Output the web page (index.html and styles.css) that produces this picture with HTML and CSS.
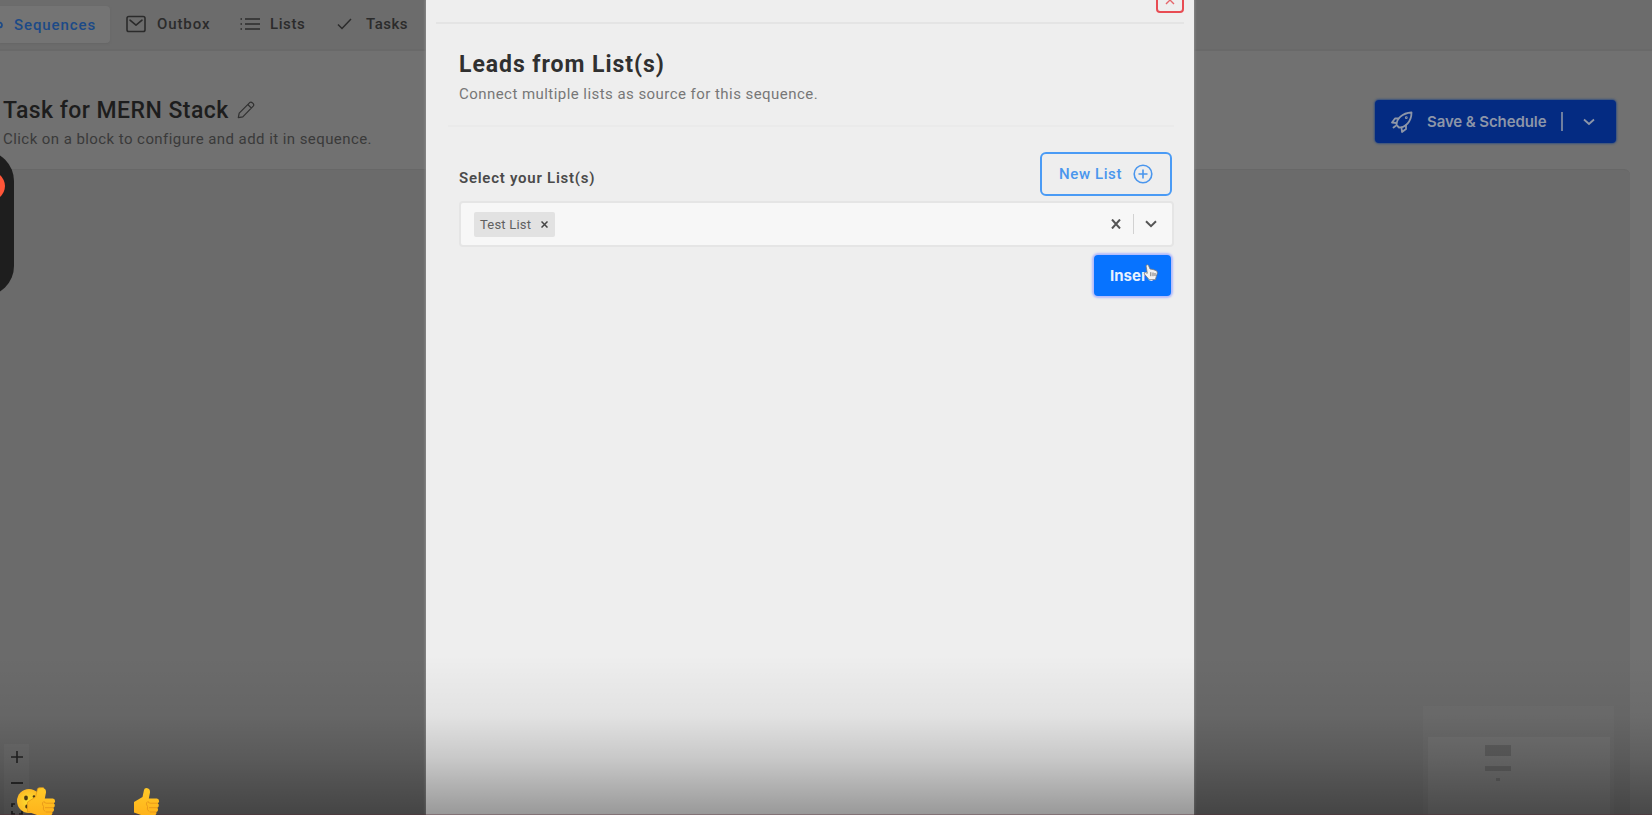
FILE: index.html
```html
<!DOCTYPE html>
<html lang="en">
<head>
<meta charset="utf-8">
<title>Sequences</title>
<link rel="stylesheet" href="styles.css">
</head>
<body>
<div class="screen">
  <header class="nav">
    <div class="tab tab-active"><svg width="5" height="12" viewBox="0 0 5 12" fill="none" stroke="currentColor" stroke-width="1.7"><path d="M-3 6a2.5 2.5 0 0 1 5 0a2.5 2.5 0 0 1-5 0"/></svg><span class="t-seq">Sequences</span></div>
    <div class="tab outbox"><svg width="20" height="18" viewBox="0 0 20 18" fill="none" stroke="currentColor" stroke-width="1.6" stroke-linecap="round" stroke-linejoin="round"><rect x="1" y="1.5" width="18" height="15" rx="1.8"/><path d="M4 5.2l6 5 6-5"/></svg><span class="t-out">Outbox</span></div>
    <div class="tab lists"><svg width="20" height="14" viewBox="0 0 20 14" fill="none" stroke="currentColor" stroke-width="1.4"><path d="M5 2h15M5 7h15M5 12h15M.5 2H2M.5 7H2M.5 12H2"/></svg><span class="t-lists">Lists</span></div>
    <div class="tab tasks"><svg width="15" height="12" viewBox="0 0 15 12" fill="none" stroke="currentColor" stroke-width="1.5"><path d="M1 6.5l4 4L14 1"/></svg><span class="t-tasks">Tasks</span></div>
  </header>
  <main class="page">
    <div class="page-head">
      <div>
        <h1 class="title"><span>Task for MERN Stack</span><svg width="18" height="18" viewBox="0 0 18 18" fill="none" stroke="currentColor" stroke-width="1.2" stroke-linejoin="round"><path d="M1.3 16.7l.9-4.6L12.7 1.6q1.3-1 2.5.1l1 1q1.1 1.2 0 2.5L5.8 15.8zM10.8 3.5l3.6 3.6"/></svg></h1>
        <p class="hint">Click on a block to configure and add it in sequence.</p>
      </div>
      <div class="save"><svg width="22" height="22" viewBox="0 0 22 22" fill="none" stroke="currentColor" stroke-width="1.8" stroke-linejoin="round" stroke-linecap="round"><path d="M8 16.500L5.500 14C5.500 8 11 2 20.500 1.500C20.500 11 14 16.500 8 16.500z"/><path d="M7.400 7.500H4L1 11.500l4.500.5M15 14.500V18l-4 3-.5-4.500M4.500 15l-2 1.500"/><circle cx="15.300" cy="6.700" r=".5"/></svg><span class="t-save">Save &amp; Schedule</span><i class="save-sep"></i><svg class="chev" width="12" height="8" viewBox="0 0 12 8" fill="none" stroke="currentColor" stroke-width="1.8"><path d="M1 1.5l5 4.500 5-4.500"/></svg></div>
    </div>
    <div class="canvas">
      <div class="zoom-controls">
        <svg width="12" height="12" viewBox="0 0 12 12" stroke="currentColor" stroke-width="1.6"><path d="M0 6h12M6 0v12"/></svg>
        <svg width="12" height="12" viewBox="0 0 12 12" stroke="currentColor" stroke-width="1.8"><path d="M0 6h12"/></svg>
        <svg width="12" height="12" viewBox="0 0 12 12" fill="none" stroke="currentColor" stroke-width="1.7"><path d="M1 4V1h3M8 1h3v3M11 8v3H8M4 11H1V8"/></svg>
      </div>
      <div class="minimap"><div class="minimap-view"><i class="node node-a"></i><i class="node node-b"></i><i class="node node-c"></i></div></div>
    </div>
  </main>

  <div class="recorder"><i class="rec-dot"></i></div>

  <section class="modal">
    <div class="modal-bar"><div class="close"><svg width="10" height="10" viewBox="0 0 10 10" fill="none" stroke="currentColor" stroke-width="1.4"><path d="M1 1l8 8M9 1L1 9"/></svg></div></div>
    <div class="modal-head">
      <h2 class="modal-title">Leads from List(s)</h2>
      <p class="modal-sub">Connect multiple lists as source for this sequence.</p>
    </div>
    <div class="modal-body">
      <div class="row">
        <span class="label">Select your List(s)</span>
        <div class="new-list"><span class="t-new">New List</span><svg width="20" height="20" viewBox="0 0 20 20" fill="none" stroke="currentColor" stroke-width="1.6"><circle cx="10" cy="10" r="8.8"/><path d="M5.500 10h9M10 5.500v9"/></svg></div>
      </div>
      <div class="select">
        <div class="tag"><span class="t-tag">Test List</span><svg width="7" height="7" viewBox="0 0 7 7" fill="none" stroke="currentColor" stroke-width="1.5"><path d="M.5.5l6 6M6.500.5l-6 6"/></svg></div>
        <svg class="clear" width="10" height="10" viewBox="0 0 10 10" fill="none" stroke="currentColor" stroke-width="2"><path d="M1 .5l8 9M9 .5l-8 9"/></svg>
        <i class="select-sep"></i>
        <svg width="12" height="8" viewBox="0 0 12 8" fill="none" stroke="currentColor" stroke-width="2"><path d="M1 1.300l5 4.800 5-4.800"/></svg>
      </div>
      <div class="actions"><div class="insert"><span class="t-insert">Insert</span></div></div>
    </div>
  </section>

  <svg class="pointer" width="15" height="17" viewBox="0 0 15 17"><path d="M3 1.500q1.800-1.500 2.700.3L7 5l3 .5 3.400 1.200q1.400 1 .8 3l-1 3-.8 3H6.200L1.300 10q-.5-1.500 1-1.500l2 .8z" fill="#f2f2f2" stroke="#777" stroke-width=".8"/><path d="M7.800 8.200v4M10 8.500v3.700M12 9v3" stroke="#777" stroke-width="1"/></svg>
  <div class="shade"></div>
  <div class="progress"></div>

  <svg class="reactions" width="170" height="28" viewBox="0 0 170 28">
    <defs>
      <linearGradient id="skin" x1="0" y1="0" x2="0" y2="1"><stop offset="0" stop-color="#ffc928"/><stop offset="1" stop-color="#ffb31a"/></linearGradient>
      <radialGradient id="face"><stop offset="0" stop-color="#fde030"/><stop offset="1" stop-color="#fcb924"/></radialGradient>
      <g id="thumb">
        <path d="M0 14L8.500 9 10 2Q10.300 0 12.500 0 16.300.3 16 4.500L14.800 10.500H23Q25.300 11 25.100 13.500 24.900 14.800 23.700 15.200 25.300 16 24.700 18.200 24.300 19.400 23.200 19.700 24.500 20.700 23.900 22.500 23.500 23.800 22.300 24 23 25.500 21.500 27H7L0 24.500z" fill="url(#skin)"/>
        <path d="M23.700 15.200h-7.500q-2.200-.2-2.400-2.200M23.200 19.700H15M22.300 24h-6.500M13 14q-1.500 2 .5 4.500-1 3 1.500 5" fill="none" stroke="#e8961a" stroke-width=".9"/>
      </g>
    </defs>
    <circle cx="29" cy="14" r="12" fill="url(#face)"/>
    <ellipse cx="26" cy="11" rx="1.900" ry="2.400" fill="#4c3a12"/><circle cx="34" cy="9.500" r="1.300" fill="#4c3a12"/><ellipse cx="26.500" cy="19.500" rx="1.200" ry="2" fill="#4c3a12"/>
    <path d="M27.500 15l8-5 2-8q.5-1.200 2-1.200h4v10l-9 14h-7z" fill="url(#skin)" stroke="#e69a14" stroke-width=".8"/>
    <use href="#thumb" x="30" y="1"/>
    <use href="#thumb" x="134" y="1"/>
  </svg>
</div>
</body>
</html>
```

FILE: styles.css
```css
* { box-sizing: border-box; }
body { margin: 0; font-family: Roboto, "Liberation Sans", sans-serif; }
svg { display: block; flex: none; }
h1, h2, p { margin: 0; }
i { display: block; flex: none; }
span { white-space: nowrap; }
.screen { position: relative; width: 1652px; height: 815px; overflow: hidden; background: #717171; display: flex; flex-direction: column; }

.nav { height: 51px; flex: none; display: flex; align-items: flex-start; background: #6c6c6c; border-bottom: 2px solid #696969; font-size: 15px; font-weight: 500; color: #2b2b2b; padding-top: 6px; }
.tab { display: flex; align-items: center; height: 36px; }
.tab-active { width: 110px; height: 37px; gap: 9px; background: #747474; border-radius: 0 4px 4px 0; color: #1c4a87; box-shadow: 0 1px 2px #666; }
.outbox { margin-left: 16px; gap: 11px; width: 94px; }
.lists { margin-left: 20px; gap: 10px; width: 78px; }
.tasks { margin-left: 19px; gap: 14px; }
.t-seq { letter-spacing: .9px; }
.t-out { letter-spacing: .9px; }
.t-lists { letter-spacing: .6px; }
.t-tasks { letter-spacing: .5px; }

.page { flex: 1; display: flex; flex-direction: column; }
.page-head { height: 118px; display: flex; justify-content: space-between; padding: 46px 36px 0 3px; }
.title { display: flex; align-items: center; gap: 8px; height: 26px; font-size: 23px; font-weight: 500; letter-spacing: .45px; color: #1d1d1d; }
.title svg { color: #303030; }
.hint { margin-top: 6px; font-size: 15px; line-height: 20px; letter-spacing: .43px; color: #3a3a3a; }
.save { margin-top: 3px; width: 241px; height: 43px; display: flex; align-items: center; padding-left: 16px; border-radius: 4px; background: #042b82; box-shadow: 0 0 2px 1px #35507f; color: #8d96a8; font-size: 15px; font-weight: 600; font-family: Inter, sans-serif; }
.t-save { width: 119px; margin-left: 14px; letter-spacing: -.1px; }
.save-sep { width: 2px; height: 19px; margin-left: 15px; background: #6f7f9f; }
.chev { margin-left: 20px; }

.canvas { flex: 1; width: 1630px; background: #6b6b6b; border-top: 1px solid #676767; border-radius: 0 6px 0 0; display: flex; justify-content: space-between; align-items: flex-end; padding: 0 16px 0 4px; }
.zoom-controls { width: 25px; height: 71px; background: #707070; display: flex; flex-direction: column; align-items: center; gap: 14px; padding-top: 7px; color: #252525; }
.minimap { width: 191px; height: 109px; padding: 31px 4px 0 5px; background: #6e6e6e; }
.minimap-view { height: 78px; background: #747474; display: flex; flex-direction: column; align-items: center; padding: 8px 43px 0 0; }
.node { background: #626262; }
.node-a { width: 26px; height: 11px; }
.node-b { width: 26px; height: 5px; margin-top: 10px; }
.node-c { width: 4px; height: 3px; margin-top: 7px; }

.recorder { position: absolute; left: -47px; top: 151px; width: 61px; height: 145px; border-radius: 30px; background: #1e1e1e; }
.rec-dot { margin: 19px 0 0 16px; width: 36px; height: 32px; border-radius: 50%; background: #ff5538; }

.modal { position: absolute; left: 426px; top: 0; width: 768px; height: 815px; background: #eee; box-shadow: 0 0 2px 1px #8a8a8a; display: flex; flex-direction: column; }
.modal-bar { height: 24px; margin: 0 10px; border-bottom: 2px solid #e4e4e4; display: flex; justify-content: flex-end; }
.close { width: 28px; height: 28px; margin-top: -15px; border: 2px solid #e84c53; border-radius: 4px; color: #e5666b; display: flex; justify-content: center; padding-top: 8px; }
.modal-head { height: 103px; margin: 0 20px 0 22px; padding: 26px 0 0 11px; border-bottom: 2px solid #eaeaea; }
.modal-title { font-size: 23px; line-height: 30px; font-weight: 700; letter-spacing: .95px; color: #303030; }
.modal-sub { margin-top: 4px; font-size: 15px; line-height: 20px; letter-spacing: .45px; color: #777; }
.modal-body { padding: 25px 20px 0 33px; display: flex; flex-direction: column; }
.row { display: flex; justify-content: space-between; height: 49px; padding-right: 2px; }
.label { padding-top: 16px; font-size: 15px; line-height: 20px; font-weight: 600; letter-spacing: .75px; color: #4a4a4a; }
.new-list { width: 132px; height: 44px; border: 2px solid #4a9bf5; border-radius: 6px; display: flex; align-items: center; padding-left: 17px; gap: 10px; color: #4a96ed; font-size: 15px; font-weight: 500; }
.t-new { width: 64px; letter-spacing: .6px; }
.select { height: 46px; border: 2px solid #e5e5e5; border-radius: 4px; background: #f7f7f7; display: flex; align-items: center; padding: 0 15px 0 13px; color: #555; }
.tag { width: 81px; height: 25px; border-radius: 2px; background: #e2e2e2; display: flex; align-items: center; padding-left: 6px; font-size: 13px; color: #606060; }
.tag svg { color: #444; }
.t-tag { width: 61px; letter-spacing: .2px; }
.clear { margin-left: auto; }
.select-sep { width: 1px; height: 20px; margin: 0 11px 0 12px; background: #d2d2d2; }
.actions { display: flex; justify-content: flex-end; padding: 8px 3px 0 0; }
.insert { width: 77px; height: 41px; border-radius: 4px; background: #0773ff; box-shadow: 0 0 2px 2px #b3bbfb; display: flex; align-items: center; padding-left: 16px; color: #e8f1ff; font-size: 15px; font-weight: 700; font-family: Inter, sans-serif; }

.pointer { position: absolute; left: 1143px; top: 264px; }
.shade { position: absolute; left: 0; right: 0; top: 655px; height: 160px; background: linear-gradient(to bottom, rgba(0,0,0,0), rgba(0,0,0,.05) 38%, rgba(0,0,0,.16) 65%, rgba(0,0,0,.36)); }
.progress { position: absolute; left: 0; right: 0; bottom: 0; height: 1px; background: rgba(90,40,52,.35); }
.reactions { position: absolute; left: 0; top: 787px; }
```
